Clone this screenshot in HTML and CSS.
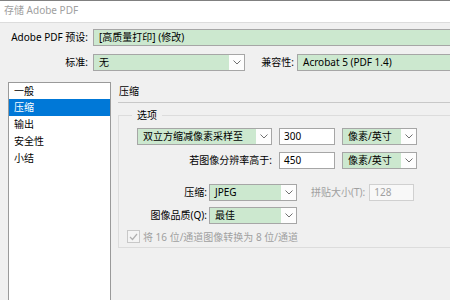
FILE: index.html
```html
<!DOCTYPE html>
<html lang="zh-CN">
<head>
    <meta charset="UTF-8">
    <title>存储 Adobe PDF</title>
    <link rel="stylesheet" href="styles.css">
</head>
<body>
    <div class="dialog">
        <div class="titlebar">存储 Adobe PDF</div>

        <div class="top">
            <div class="row">
                <span class="label label-preset">Adobe PDF 预设:</span>
                <div class="field field-wide">[高质量打印] (修改)</div>
            </div>
            <div class="row">
                <span class="label label-preset">标准:</span>
                <div class="combo combo-standard">
                    <span class="combo-text">无</span>
                    <span class="combo-arrow"><svg width="8" height="5" viewBox="0 0 8 5"><polyline points="0.5,0.5 4,4 7.5,0.5" fill="none" stroke="#707070" stroke-width="1"/></svg></span>
                </div>
                <span class="label label-compat">兼容性:</span>
                <div class="field field-wide">Acrobat 5 (PDF 1.4)</div>
            </div>
        </div>

        <div class="main">
            <ul class="nav">
                <li>一般</li>
                <li class="active">压缩</li>
                <li>输出</li>
                <li>安全性</li>
                <li>小结</li>
            </ul>

            <div class="panel">
                <div class="panel-title">压缩</div>

                <fieldset class="group">
                    <legend>选项</legend>

                    <div class="opt-row row-sample">
                        <div class="combo combo-sample">
                            <span class="combo-text">双立方缩减像素采样至</span>
                            <span class="combo-arrow"><svg width="8" height="5" viewBox="0 0 8 5"><polyline points="0.5,0.5 4,4 7.5,0.5" fill="none" stroke="#707070" stroke-width="1"/></svg></span>
                        </div>
                        <div class="input input-res">300</div>
                        <div class="combo combo-unit">
                            <span class="combo-text">像素/英寸</span>
                            <span class="combo-arrow"><svg width="8" height="5" viewBox="0 0 8 5"><polyline points="0.5,0.5 4,4 7.5,0.5" fill="none" stroke="#707070" stroke-width="1"/></svg></span>
                        </div>
                    </div>

                    <div class="opt-row row-above">
                        <span class="label label-above">若图像分辨率高于:</span>
                        <div class="input input-res">450</div>
                        <div class="combo combo-unit">
                            <span class="combo-text">像素/英寸</span>
                            <span class="combo-arrow"><svg width="8" height="5" viewBox="0 0 8 5"><polyline points="0.5,0.5 4,4 7.5,0.5" fill="none" stroke="#707070" stroke-width="1"/></svg></span>
                        </div>
                    </div>

                    <div class="opt-row row-compress">
                        <span class="label label-short">压缩:</span>
                        <div class="combo combo-short">
                            <span class="combo-text">JPEG</span>
                            <span class="combo-arrow"><svg width="8" height="5" viewBox="0 0 8 5"><polyline points="0.5,0.5 4,4 7.5,0.5" fill="none" stroke="#707070" stroke-width="1"/></svg></span>
                        </div>
                        <span class="label disabled label-tile">拼贴大小(T):</span>
                        <div class="input input-tile disabled">128</div>
                    </div>

                    <div class="opt-row row-quality">
                        <span class="label label-short">图像品质(Q):</span>
                        <div class="combo combo-short">
                            <span class="combo-text">最佳</span>
                            <span class="combo-arrow"><svg width="8" height="5" viewBox="0 0 8 5"><polyline points="0.5,0.5 4,4 7.5,0.5" fill="none" stroke="#707070" stroke-width="1"/></svg></span>
                        </div>
                    </div>

                    <div class="check-row disabled">
                        <span class="checkbox"><svg width="9" height="8" viewBox="0 0 9 8"><polyline points="1,4 3.5,6.5 8,1" fill="none" stroke="#b0b0b0" stroke-width="1.2"/></svg></span>
                        <span>将 16 位/通道图像转换为 8 位/通道</span>
                    </div>
                </fieldset>
            </div>
        </div>
    </div>
</body>
</html>
```

FILE: styles.css
```css
body {
    margin: 0;
    overflow: hidden;
    background-color: #f0f0f0;
    font-family: "Noto Sans", "Noto Sans CJK SC", sans-serif;
    font-size: 10px;
    color: #000;
}

.dialog {
    width: 480px;
    height: 300px;
    background-color: #f0f0f0;
}

.titlebar {
    height: 21px;
    line-height: 19px;
    padding-left: 4px;
    background-color: #fff;
    color: #a0a0a0;
    border-top: 1px solid #808080;
    border-bottom: 1px solid #dcdcdc;
}

.top {
    padding-top: 6px;
}

.row {
    display: flex;
    align-items: center;
    height: 17px;
    margin-bottom: 8px;
}

.label {
    white-space: nowrap;
    text-align: right;
    line-height: 17px;
}

.label-preset {
    width: 88px;
    margin-right: 5px;
}

.label-compat {
    width: 49px;
    margin-right: 3px;
}

.field {
    height: 15px;
    line-height: 15px;
    padding-left: 5px;
    background-color: #cce8cf;
    border: 1px solid #a6a6a6;
}

.field-wide {
    flex: 1;
}

.combo {
    display: flex;
    height: 15px;
    border: 1px solid #a6a6a6;
    background-color: #fdfdfd;
}

.combo-text {
    flex: 1;
    padding-left: 5px;
    line-height: 15px;
    background-color: #cce8cf;
    white-space: nowrap;
    overflow: hidden;
}

.combo-arrow {
    width: 15px;
    display: flex;
    align-items: center;
    justify-content: center;
}

.combo-standard {
    width: 150px;
}

.main {
    display: flex;
    margin-top: 11px;
    padding-left: 8px;
}

.nav {
    list-style: none;
    margin: 0;
    padding: 0;
    width: 101px;
    height: 220px;
    background-color: #fff;
    border: 1px solid #9a9a9a;
}

.nav li {
    height: 17px;
    line-height: 17px;
    padding-left: 5px;
}

.nav li:first-child {
    height: 16px;
}

.nav li.active {
    background-color: #0078d7;
    color: #fff;
}

.panel {
    flex: 1;
    margin-left: 7px;
}

.panel-title {
    height: 20px;
    line-height: 18px;
    padding-left: 1px;
    border-bottom: 1px solid #c8c8c8;
}

.group {
    margin: 5px 0 0;
    padding: 0 0 3px 8px;
    border: 1px solid #dcdcdc;
    border-right: none;
}

.group legend {
    margin-left: 5px;
    padding: 0 5px;
    line-height: 14px;
}

.opt-row {
    display: flex;
    align-items: center;
    height: 17px;
    margin-left: 10px;
}

.row-sample {
    margin-top: 6px;
    margin-bottom: 7px;
}

.row-above {
    margin-bottom: 15px;
}

.row-compress {
    margin-bottom: 6px;
}

.row-quality {
    margin-bottom: 5px;
}

.combo-sample {
    width: 133px;
}

.input {
    height: 15px;
    line-height: 15px;
    padding-left: 4px;
    background-color: #fff;
    border: 1px solid #a6a6a6;
}

.input-res {
    width: 50px;
    margin-left: 7px;
}

.combo-unit {
    width: 73px;
    margin-left: 7px;
}

.label-above {
    width: 135px;
}

.label-short {
    width: 70px;
    margin-right: 2px;
}

.combo-short {
    width: 86px;
}

.label-tile {
    margin-left: 14px;
    margin-right: 4px;
}

.input-tile {
    width: 39px;
    border-color: #d0d0d0;
    background-color: #f8f8f8;
}

.disabled {
    color: #a0a0a0;
}

.check-row {
    display: flex;
    align-items: center;
    height: 15px;
    gap: 3px;
}

.checkbox {
    width: 11px;
    height: 11px;
    border: 1px solid #c8c8c8;
    background-color: #f4f4f4;
    display: flex;
    align-items: center;
    justify-content: center;
}
```
